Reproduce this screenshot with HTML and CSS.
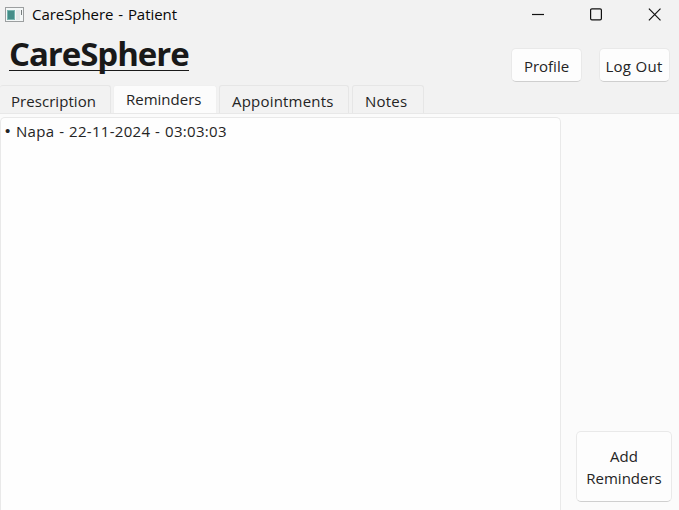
FILE: index.html
```html
<!DOCTYPE html>
<html lang="en">
<head>
<meta charset="utf-8">
<title>CareSphere - Patient</title>
<link rel="stylesheet" href="styles.css">
</head>
<body>
<div class="window">
  <header class="titlebar">
    <svg class="app-icon" width="19" height="15" viewBox="0 0 19 15">
      <rect x=".5" y=".5" width="18" height="14" fill="#f4f7f7" stroke="#9c9fa0"/>
      <rect x="2" y="3" width="8" height="10" fill="#76b5af"/>
      <rect x="3" y="4" width="6" height="8" fill="#438d88"/>
      <rect x="11" y="3" width="4" height="10" fill="#e2e8e8"/>
      <rect x="16" y="3" width="1" height="5" fill="#777d7e"/>
    </svg>
    <span class="caption">CareSphere - Patient</span>
    <div class="controls">
      <svg width="13" height="13" viewBox="0 0 13 13"><path d="M0 6.5h12"/></svg>
      <svg width="13" height="13" viewBox="0 0 13 13"><rect x=".6" y=".8" width="10.8" height="11" rx="1.3"/></svg>
      <svg width="13" height="13" viewBox="0 0 13 13"><path d="M.9.7l11.6 11.6M12.5.7L.9 12.3"/></svg>
    </div>
  </header>
  <div class="brandbar">
    <h1 class="brand">CareSphere</h1>
    <div class="actions">
      <button class="btn profile">Profile</button>
      <button class="btn logout">Log Out</button>
    </div>
  </div>
  <nav class="tabs">
    <div class="tab prescription"><span>Prescription</span></div>
    <div class="tab reminders active"><span>Reminders</span></div>
    <div class="tab appointments"><span>Appointments</span></div>
    <div class="tab notes"><span>Notes</span></div>
  </nav>
  <main class="panel">
    <section class="list"><span class="bullet">•</span><span class="entry">Napa - 22-11-2024 - 03:03:03</span></section>
    <aside class="side"><button class="btn add"><span>Add</span><span>Reminders</span></button></aside>
  </main>
</div>
</body>
</html>
```
FILE: styles.css
```css
* { box-sizing: border-box; }
body { margin: 0; background: #f2f2f2; color: #242424; font: 15px/20px "Open Sans", "Noto Sans", sans-serif; }
.window { width: 679px; height: 510px; overflow: hidden; display: flex; flex-direction: column; }
.titlebar { height: 30px; display: flex; align-items: center; padding: 0 18px 2px 5px; color: #080808; }
.app-icon { margin-right: 8px; }
.caption { letter-spacing: -.05px; word-spacing: 1px; }
.controls { margin-left: auto; display: flex; gap: 45px; }
.controls svg { fill: none; stroke: #111; stroke-width: 1.2; }
.brandbar { height: 55px; display: flex; justify-content: space-between; padding: 0 9px 0 9px; }
.brand { margin: 5px 0 0; height: 36px; width: 180px; font-size: 33px; line-height: 38px; letter-spacing: -1.05px; color: #191919; border-bottom: 1px solid #191919; white-space: nowrap; }
.actions { display: flex; gap: 17px; padding-top: 18px; }
.btn { display: flex; align-items: center; justify-content: center; padding: 2px 0 0; font: inherit; color: inherit; white-space: nowrap; background: #fdfdfd; border: 1px solid #e9e9e9; border-bottom-color: #cfcfcf; border-radius: 5px; }
.actions .btn { width: 71px; height: 34px; }
.actions .logout { letter-spacing: .3px; padding-right: 1px; }
.tabs { height: 28px; display: flex; gap: 3px; }
.tab { height: 28px; border: 1px solid #e6e6e6; border-bottom: 0; border-radius: 3px 3px 0 0; padding: 5px 0 0 12px; white-space: nowrap; }
.tab.active { background: #fcfcfc; border-color: #f0f0f0; padding: 3px 0 0 12px; }
.prescription { width: 111px; border-left: 0; padding-left: 11px; letter-spacing: .05px; }
.reminders { width: 104px; margin-left: -1px; }
.appointments { width: 130px; margin-left: -1px; letter-spacing: .2px; }
.notes { width: 72px; letter-spacing: .2px; }
.panel { flex: 1; display: flex; background: #fbfbfb; border-top: 1px solid #e8e8e8; padding-top: 3px; }
.list { width: 561px; display: flex; padding: 3px 0 0 4px; background: #fefefe; border: 1px solid #e9e9e9; border-bottom: 0; border-radius: 5px 5px 0 0; white-space: nowrap; }
.bullet { width: 11px; font-family: "Liberation Sans", sans-serif; }
.entry { letter-spacing: .3px; word-spacing: .6px; }
.side { flex: 1; display: flex; align-items: flex-end; padding: 0 7px 8px 15px; }
.add { width: 96px; height: 71px; padding: 0; flex-direction: column; line-height: 22px; }
```
